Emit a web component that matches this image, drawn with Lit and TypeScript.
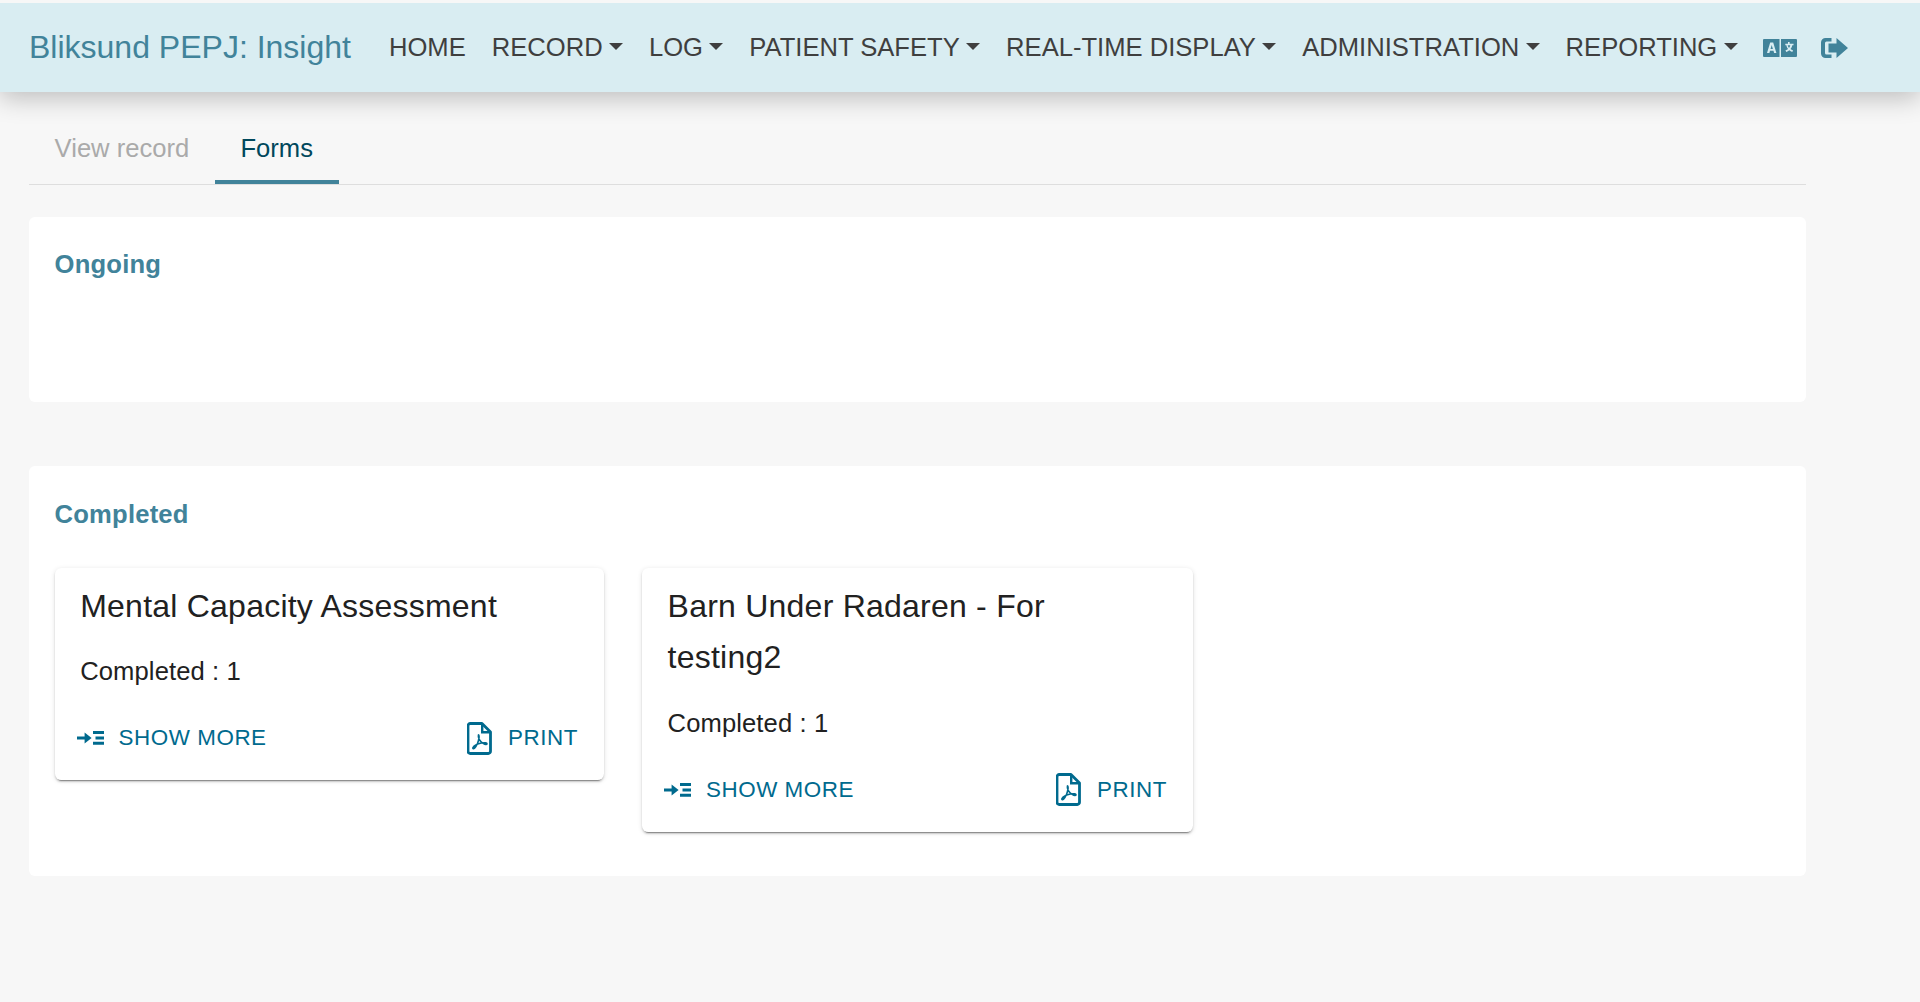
import { LitElement, html, css, svg } from "lit";
import { customElement } from "lit/decorators.js";

const navItems: [string, boolean][] = [
  ["HOME", false],
  ["RECORD", true],
  ["LOG", true],
  ["PATIENT SAFETY", true],
  ["REAL-TIME DISPLAY", true],
  ["ADMINISTRATION", true],
  ["REPORTING", true],
];

const indentIcon = svg`<svg class="ic-more" viewBox="0 0 28 16" width="28" height="16"><path fill="currentColor" d="M0 6.4h7.6V2.4L14.6 8l-7 5.600V9.600H0zM16 1h11v3H16zM18.500 6.500H27v3h-8.500zM16 11.800h11v3H16z"/></svg>`;
const pdfIcon = svg`<svg class="ic-pdf" viewBox="0 0 25 33" width="25" height="33"><path fill="none" stroke="currentColor" stroke-width="2.800" stroke-linejoin="round" d="M3.200 1.500h11.800l8.500 8.600v19.200a2.200 2.200 0 0 1-2.200 2.200H3.200A2.200 2.200 0 0 1 1 29.300V3.700a2.200 2.200 0 0 1 2.200-2.200z"/><path fill="none" stroke="currentColor" stroke-width="2.400" d="M15.200 2.500v7.800h7.600"/><path fill="none" stroke="currentColor" stroke-width="1.700" d="M11.500 13c-.6 3 1 6 5 8.600 1.800 1 3.200 1 3.400.3.200-1-2-1.400-5.400-.9-4 .7-7.500 2.700-8.500 4.700-.5 1 .6 1.300 1.500.4 2-2 4.200-7.200 4.500-10.500.1-1.500-.3-2.800-.5-2.600z"/></svg>`;
const langIcon = svg`<svg viewBox="0 0 34 18" width="34" height="18"><path fill="#41839a" d="M1 0h15.500v18H1a1 1 0 0 1-1-1V1a1 1 0 0 1 1-1zM18 0h15a1 1 0 0 1 1 1v16a1 1 0 0 1-1 1H18z"/><path fill="#d9edf2" d="M7.200 3.500h3L13.400 14h-2.300l-.6-2.200H7L6.400 14H4zm1.500 2.500-1.200 4h2.400zM25 3h1.600v1.800h3.900v1.500h-1.200c-.4 1.700-1 2.900-1.800 3.800.7.500 1.500.9 2.500 1.200l-.7 1.600c-1.200-.4-2.100-.9-3-1.700-.9.800-1.900 1.300-3.100 1.700l-.7-1.600c1-.3 1.900-.7 2.600-1.200-.8-.9-1.400-2.100-1.700-3.800h-1.100V4.800H25zm-.300 3.300c.3 1.100.7 2 1.300 2.700.6-.7 1-1.600 1.300-2.700z"/></svg>`;
const exitIcon = svg`<svg viewBox="0 0 27 22" width="27" height="22"><path fill="#41839a" d="M4.500 1h6v3.600H5.500a1.500 1.500 0 0 0-1.500 1.500v9.800a1.500 1.500 0 0 0 1.500 1.500h5V21h-6A4.500 4.500 0 0 1 0 16.500v-11A4.500 4.500 0 0 1 4.500 1zM15.500 1 27 11 15.500 21v-5.500H7.500v-9h8z"/></svg>`;

@customElement("app-root")
export class AppRoot extends LitElement {
  static styles = css`
    :host {
      display: block;
      min-height: 1002px;
      box-sizing: border-box;
      padding-top: 3px;
      background: #f7f7f7;
      font-family: "Liberation Sans", Arial, sans-serif;
      color: #212121;
    }
    .nav {
      display: flex;
      align-items: center;
      height: 89px;
      padding-left: 29px;
      background: #d9edf2;
      box-shadow: 0 6px 24px rgba(0, 0, 0, 0.24);
      clip-path: inset(0 0 -40px 0);
      position: relative;
    }
    .brand {
      font-size: 32px;
      color: #41839a;
      margin-right: 38px;
      white-space: nowrap;
    }
    .links {
      display: flex;
      align-items: center;
      gap: 26px;
    }
    .link {
      display: flex;
      align-items: center;
      font-size: 25.6px;
      color: #3f3f3f;
      white-space: nowrap;
    }
    .caret {
      width: 0;
      height: 0;
      margin-left: 6.3px;
      border-left: 7px solid transparent;
      border-right: 7px solid transparent;
      border-top: 7px solid #3f3f3f;
      margin-top: -3px;
    }
    .nav-icons {
      display: flex;
      align-items: center;
      gap: 24px;
      margin-left: 25px;
    }
    .nav-icons svg {
      display: block;
    }
    main {
      padding: 0 114px 0 29px;
      display: flex;
      flex-direction: column;
    }
    .tabs {
      display: flex;
      height: 93px;
      align-items: stretch;
      border-bottom: 1px solid #dedede;
      box-sizing: border-box;
      margin-bottom: 32px;
    }
    .tab {
      display: flex;
      align-items: center;
      padding: 24px 25.6px 0;
      font-size: 25.6px;
      color: #aaa;
      border-bottom: 4px solid transparent;
    }
    .tab.active {
      color: #00485c;
      border-bottom-color: #41839a;
    }
    .panel {
      background: #fff;
      border-radius: 6px;
      padding: 28px 26px 0 25.6px;
      box-sizing: border-box;
    }
    .panel.ongoing {
      height: 185px;
      margin-bottom: 64px;
    }
    .panel.completed {
      height: 410px;
      padding-top: 29px;
    }
    h2 {
      margin: 0;
      font-size: 25.6px;
      line-height: 38px;
      font-weight: 700;
      letter-spacing: 0.2px;
      color: #41839a;
    }
    .cards {
      display: grid;
      grid-template-columns: 549.4px 551px;
      column-gap: 38px;
      align-items: start;
      margin-top: 35px;
    }
    .card {
      background: #fff;
      border-radius: 6.4px;
      box-shadow: 0 3px 1px -2px rgba(0, 0, 0, 0.34),
        0 2px 2px 0 rgba(0, 0, 0, 0.14), 0 1px 5px 0 rgba(0, 0, 0, 0.12);
      padding: 13px;
    }
    h3 {
      margin: 0 40px 0 12.6px;
      font-size: 32px;
      line-height: 51.4px;
      font-weight: 400;
      letter-spacing: 0.23px;
      color: #212121;
    }
    .count {
      margin: 20px 12.6px 19px;
      font-size: 25.6px;
      line-height: 38px;
      letter-spacing: 0.1px;
      color: #212121;
    }
    .actions {
      display: flex;
      justify-content: space-between;
      align-items: center;
      height: 58px;
    }
    .btn {
      display: flex;
      align-items: center;
      font-size: 22.4px;
      letter-spacing: 0.55px;
      color: #006a8e;
      padding: 0 13px 0 9px;
      white-space: nowrap;
    }
    .ic-more {
      margin-right: 14px;
    }
    .ic-pdf {
      margin-right: 16px;
    }
  `;

  private card(title: string) {
    return html`<div class="card">
      <h3>${title}</h3>
      <div class="count">Completed : 1</div>
      <div class="actions">
        <div class="btn">${indentIcon}SHOW MORE</div>
        <div class="btn">${pdfIcon}PRINT</div>
      </div>
    </div>`;
  }

  render() {
    return html`
      <nav class="nav">
        <div class="brand">Bliksund PEPJ: Insight</div>
        <div class="links">
          ${navItems.map(
            ([t, c]) =>
              html`<div class="link">${t}${c ? html`<span class="caret"></span>` : ""}</div>`
          )}
        </div>
        <div class="nav-icons">${langIcon}${exitIcon}</div>
      </nav>
      <main>
        <div class="tabs">
          <div class="tab">View record</div>
          <div class="tab active">Forms</div>
        </div>
        <section class="panel ongoing"><h2>Ongoing</h2></section>
        <section class="panel completed">
          <h2>Completed</h2>
          <div class="cards">
            ${this.card("Mental Capacity Assessment")}
            ${this.card("Barn Under Radaren - For testing2")}
          </div>
        </section>
      </main>
    `;
  }
}
